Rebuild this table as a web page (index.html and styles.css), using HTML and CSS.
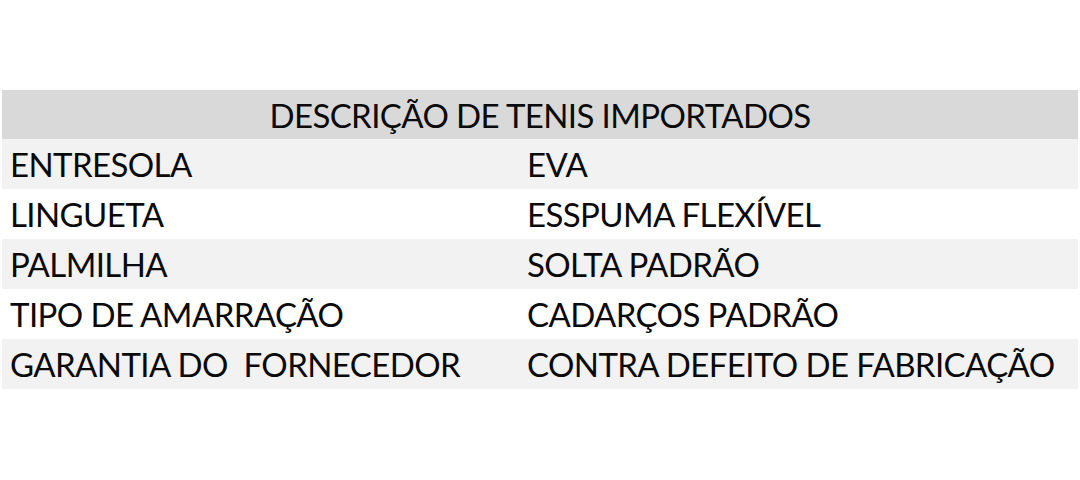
FILE: index.html
```html
<!DOCTYPE html>
<html lang="pt">
<head>
<meta charset="utf-8">
<link rel="stylesheet" href="styles.css">
</head>
<body>
<div class="page">
  <div class="sheet">
    <div class="head">DESCRIÇÃO DE TENIS IMPORTADOS</div>
    <div class="row shade"><div class="cell">ENTRESOLA</div><div class="cell val">EVA</div></div>
    <div class="row"><div class="cell">LINGUETA</div><div class="cell val">ESSPUMA FLEXÍVEL</div></div>
    <div class="row shade"><div class="cell">PALMILHA</div><div class="cell val">SOLTA PADRÃO</div></div>
    <div class="row"><div class="cell">TIPO DE AMARRAÇÃO</div><div class="cell val">CADARÇOS PADRÃO</div></div>
    <div class="row shade"><div class="cell">GARANTIA DO&nbsp; FORNECEDOR</div><div class="cell val">CONTRA DEFEITO DE FABRICAÇÃO</div></div>
  </div>
</div>
</body>
</html>
```
FILE: styles.css
```css
html, body {
  margin: 0;
  padding: 0;
  background: #ffffff;
}
.page {
  width: 1080px;
  height: 480px;
  padding: 90px 2px 0 2px;
  box-sizing: border-box;
  font-family: "Lato", "Liberation Sans", sans-serif;
  font-size: 33px;
  letter-spacing: -0.6px;
  color: #0a0a0a;
}
.sheet {
  display: flex;
  flex-direction: column;
  width: 1076px;
}
.head {
  height: 49px;
  background: #d9d9d9;
  display: flex;
  align-items: center;
  justify-content: center;
}
.row {
  height: 50px;
  display: grid;
  grid-template-columns: 517px 1fr;
  align-items: center;
  background: #ffffff;
}
.row.shade {
  background: #f2f2f2;
}
.cell {
  padding-left: 8px;
  white-space: nowrap;
}
```
